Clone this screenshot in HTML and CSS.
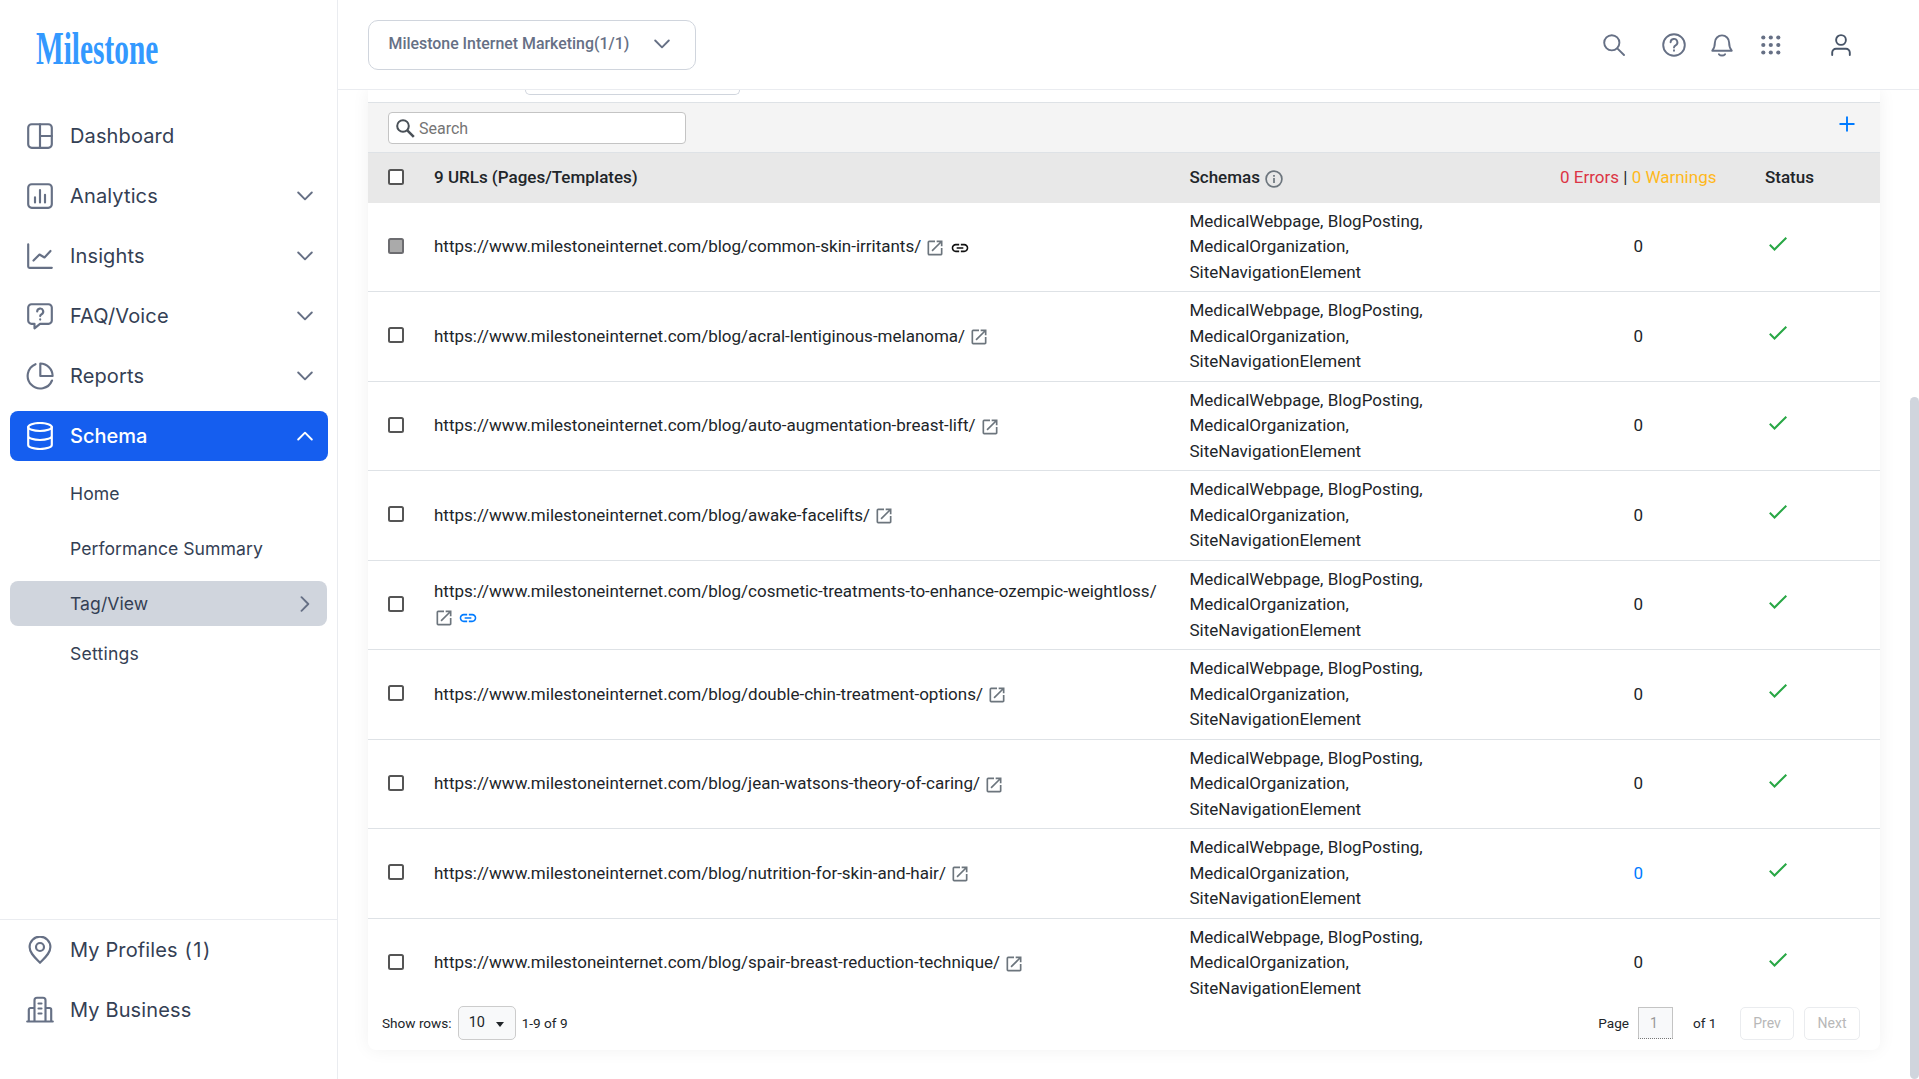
FILE: index.html
```html
<!DOCTYPE html>
<html lang="en">
<head>
<meta charset="utf-8">
<title>Milestone - Schema Tag/View</title>
<link rel="stylesheet" href="styles.css">
</head>
<body>
<svg class="sprite" aria-hidden="true">
  <symbol id="chev" viewBox="0 0 16 10"><path d="M1.200 1.500 8 8.300l6.800-6.800" fill="none" stroke="currentColor" stroke-width="1.900" stroke-linecap="round" stroke-linejoin="round"/></symbol>
  <symbol id="open" viewBox="0 0 24 24"><path fill="currentColor" d="M19 19H5V5h7V3H5a2 2 0 0 0-2 2v14a2 2 0 0 0 2 2h14c1.100 0 2-.9 2-2v-7h-2v7zM14 3v2h3.590l-9.830 9.830 1.410 1.410L19 6.410V10h2V3h-7z"/></symbol>
  <symbol id="link" viewBox="0 0 24 24"><path fill="currentColor" d="M3.900 12c0-1.710 1.390-3.100 3.100-3.100h4V7H7c-2.760 0-5 2.240-5 5s2.240 5 5 5h4v-1.900H7c-1.710 0-3.100-1.390-3.100-3.100zM8 13h8v-2H8v2zm9-6h-4v1.900h4c1.710 0 3.100 1.390 3.100 3.100s-1.390 3.100-3.100 3.100h-4V17h4c2.760 0 5-2.240 5-5s-2.240-5-5-5z"/></symbol>
  <symbol id="check" viewBox="0 0 20 16"><path d="M1.800 8.800 6.500 13.500 18.300 1.700" fill="none" stroke="currentColor" stroke-width="2"/></symbol>
</svg>
<div class="app">
  <aside class="sidebar">
    <div class="logo"><span class="logo-text">Milestone</span></div>
    <nav class="nav">
      <a class="item"><svg class="ico" viewBox="0 0 28 28"><rect x="2.200" y="2.200" width="23.600" height="23.600" rx="3.500"/><path d="M14 2.200v23.600M14 14h11.800"/></svg><span>Dashboard</span></a>
      <a class="item"><svg class="ico" viewBox="0 0 28 28"><rect x="2.200" y="2.200" width="23.600" height="23.600" rx="3.500"/><path d="M9 15.200v5.300M14 8v12.500M19 12.700v7.800"/></svg><span>Analytics</span><svg class="chev"><use href="#chev"/></svg></a>
      <a class="item"><svg class="ico" viewBox="0 0 28 28"><path d="M2.200 2.200v22.300q0 1.300 1.300 1.300h22.300M7.500 18.500l6-6 5 3 6-6.500"/></svg><span>Insights</span><svg class="chev"><use href="#chev"/></svg></a>
      <a class="item"><svg class="ico" viewBox="0 0 28 28"><path d="M5.500 2.200h17a3.300 3.300 0 0 1 3.300 3.300v13a3.300 3.300 0 0 1-3.300 3.300H14l-5.500 4.500v-4.500h-3a3.300 3.300 0 0 1-3.300-3.300v-13a3.300 3.300 0 0 1 3.300-3.300zM11.200 9.500a3 3 0 1 1 4.400 2.700c-1 .5-1.400.9-1.400 1.900M14.200 17.300v.3"/></svg><span>FAQ/Voice</span><svg class="chev"><use href="#chev"/></svg></a>
      <a class="item"><svg class="ico" viewBox="0 0 28 28"><path d="M14.300 1.500V14h12.300A12.500 12.500 0 0 0 14.300 1.500zM9.500 2.200A12.600 12.600 0 1 0 26 18.500"/></svg><span>Reports</span><svg class="chev"><use href="#chev"/></svg></a>
      <a class="item active"><svg class="ico" viewBox="0 0 28 28"><ellipse cx="14" cy="5" rx="11.800" ry="4"/><path d="M2.200 5v18c0 2.200 5.200 4 11.800 4s11.800-1.800 11.800-4V5M2.200 14c0 2.200 5.200 4 11.800 4s11.800-1.800 11.800-4"/></svg><span>Schema</span><svg class="chev up"><use href="#chev"/></svg></a>
    </nav>
    <div class="subnav">
      <a class="sub tall">Home</a>
      <a class="sub tall">Performance Summary</a>
      <a class="sub current"><span>Tag/View</span><svg class="chev side"><use href="#chev"/></svg></a>
      <a class="sub last">Settings</a>
    </div>
    <div class="side-foot">
      <a class="item profiles"><svg class="ico" viewBox="0 0 28 28"><path d="M14 26.800C9 21.500 3.600 17 3.600 11a10.400 10.400 0 0 1 20.800 0c0 6-5.400 10.500-10.400 15.800z"/><circle cx="14" cy="11" r="4"/></svg><span>My Profiles <b>(1)</b></span></a>
      <a class="item"><svg class="ico" viewBox="0 0 28 28"><path d="M1.200 25.500h25.600M8.500 25V4.200a2.500 2.500 0 0 1 2.500-2.500h6a2.500 2.500 0 0 1 2.500 2.500V25M8.500 12h-4a1.700 1.700 0 0 0-1.700 1.700V25M19.500 12h4a1.700 1.700 0 0 1 1.700 1.700V25M12.500 7.500h3M12.500 12.500h3M12.500 17.500h3"/></svg><span>My Business</span></a>
    </div>
  </aside>
  <div class="main">
    <header class="topbar">
      <div class="account"><span>Milestone Internet Marketing(1/1)</span><svg class="chev"><use href="#chev"/></svg></div>
      <div class="tools">
        <svg class="t-search" width="22" height="22" viewBox="0 0 22 22"><circle cx="8.800" cy="8.800" r="7.600"/><path d="M14.300 14.300 21 21"/></svg>
        <svg class="t-help" width="24" height="24" viewBox="0 0 24 24"><circle cx="12" cy="12" r="10.800"/><path d="M8.600 9.300a3.400 3.400 0 1 1 5 3c-1.200.6-1.600 1.100-1.600 2.300M12 17.300v.4"/></svg>
        <svg class="t-bell" width="22" height="24" viewBox="0 0 22 24"><path d="M1.300 17.700c2.200-2.700 2.600-5.200 2.600-8.200a7.100 7.100 0 0 1 14.200 0c0 3 .4 5.500 2.600 8.200zM8 21.300c1.500 1.600 4.500 1.600 6 0"/></svg>
        <svg class="t-grid" width="20" height="20" viewBox="0 0 20 20"><g class="dots"><circle cx="2.300" cy="2.500" r="2.100"/><circle cx="9.800" cy="2.500" r="2.100"/><circle cx="17.300" cy="2.500" r="2.100"/><circle cx="2.300" cy="10" r="2.100"/><circle cx="9.800" cy="10" r="2.100"/><circle cx="17.300" cy="10" r="2.100"/><circle cx="2.300" cy="17.500" r="2.100"/><circle cx="9.800" cy="17.500" r="2.100"/><circle cx="17.300" cy="17.500" r="2.100"/></g></svg>
        <svg class="t-user" width="20" height="22" viewBox="0 0 20 22"><circle cx="10" cy="6" r="4.900"/><path d="M1.200 21v-2.500a3.800 3.800 0 0 1 3.800-3.800h10a3.800 3.800 0 0 1 3.800 3.800V21"/></svg>
      </div>
    </header>
    <section class="content">
      <div class="card">
        <div class="filters"><div class="filter-box"></div></div>
        <div class="toolbar">
          <div class="search"><svg width="19" height="19" viewBox="0 0 19 19"><circle cx="7" cy="7" r="5.800"/><path class="handle" d="m11.300 11.300 6.500 6.500"/></svg><span>Search</span></div>
          <svg class="plus" width="16" height="16" viewBox="0 0 16 16"><path d="M8 .5v15M.5 8h15"/></svg>
        </div>
        <div class="row head">
          <i class="box"></i><div>9 URLs (Pages/Templates)</div>
          <div class="sch-h"><span>Schemas</span><svg width="18" height="18" viewBox="0 0 18 18"><circle cx="9" cy="9" r="7.900"/><path d="M9 8v5M9 5v1.700"/></svg></div>
          <div class="num"><span class="err">0 Errors</span> | <span class="warn">0 Warnings</span></div>
          <div class="status-h">Status</div>
        </div>
        <div class="row"><i class="box off"></i><div>https://www.milestoneinternet.com/blog/common-skin-irritants/ <svg class="mi"><use href="#open"/></svg> <svg class="mi black"><use href="#link"/></svg></div><div class="sch">MedicalWebpage, BlogPosting, MedicalOrganization, SiteNavigationElement</div><div class="num">0</div><svg class="ok"><use href="#check"/></svg></div>
        <div class="row"><i class="box"></i><div>https://www.milestoneinternet.com/blog/acral-lentiginous-melanoma/ <svg class="mi"><use href="#open"/></svg></div><div class="sch">MedicalWebpage, BlogPosting, MedicalOrganization, SiteNavigationElement</div><div class="num">0</div><svg class="ok"><use href="#check"/></svg></div>
        <div class="row"><i class="box"></i><div>https://www.milestoneinternet.com/blog/auto-augmentation-breast-lift/ <svg class="mi"><use href="#open"/></svg></div><div class="sch">MedicalWebpage, BlogPosting, MedicalOrganization, SiteNavigationElement</div><div class="num">0</div><svg class="ok"><use href="#check"/></svg></div>
        <div class="row"><i class="box"></i><div>https://www.milestoneinternet.com/blog/awake-facelifts/ <svg class="mi"><use href="#open"/></svg></div><div class="sch">MedicalWebpage, BlogPosting, MedicalOrganization, SiteNavigationElement</div><div class="num">0</div><svg class="ok"><use href="#check"/></svg></div>
        <div class="row"><i class="box"></i><div>https://www.milestoneinternet.com/blog/cosmetic-treatments-to-enhance-ozempic-weightloss/ <svg class="mi"><use href="#open"/></svg> <svg class="mi blue"><use href="#link"/></svg></div><div class="sch">MedicalWebpage, BlogPosting, MedicalOrganization, SiteNavigationElement</div><div class="num">0</div><svg class="ok"><use href="#check"/></svg></div>
        <div class="row"><i class="box"></i><div>https://www.milestoneinternet.com/blog/double-chin-treatment-options/ <svg class="mi"><use href="#open"/></svg></div><div class="sch">MedicalWebpage, BlogPosting, MedicalOrganization, SiteNavigationElement</div><div class="num">0</div><svg class="ok"><use href="#check"/></svg></div>
        <div class="row"><i class="box"></i><div>https://www.milestoneinternet.com/blog/jean-watsons-theory-of-caring/ <svg class="mi"><use href="#open"/></svg></div><div class="sch">MedicalWebpage, BlogPosting, MedicalOrganization, SiteNavigationElement</div><div class="num">0</div><svg class="ok"><use href="#check"/></svg></div>
        <div class="row"><i class="box"></i><div>https://www.milestoneinternet.com/blog/nutrition-for-skin-and-hair/ <svg class="mi"><use href="#open"/></svg></div><div class="sch">MedicalWebpage, BlogPosting, MedicalOrganization, SiteNavigationElement</div><div class="num blue">0</div><svg class="ok"><use href="#check"/></svg></div>
        <div class="row"><i class="box"></i><div>https://www.milestoneinternet.com/blog/spair-breast-reduction-technique/ <svg class="mi"><use href="#open"/></svg></div><div class="sch">MedicalWebpage, BlogPosting, MedicalOrganization, SiteNavigationElement</div><div class="num">0</div><svg class="ok"><use href="#check"/></svg></div>
        <div class="pager">
          <span>Show rows:</span>
          <div class="select"><span>10</span><i class="caret"></i></div>
          <span>1-9 of 9</span>
          <span class="page-label">Page</span>
          <div class="page-input">1</div>
          <span class="of">of 1</span>
          <div class="btn prev">Prev</div>
          <div class="btn next">Next</div>
        </div>
      </div>
    </section>
  </div>
  <div class="scroll"></div>
</div>
</body>
</html>
```
FILE: styles.css
```css
* { box-sizing: border-box; }
body { margin: 0; background: #fff; font-family: Roboto, "Liberation Sans", sans-serif; color: #212529; overflow: hidden; }
svg { display: block; flex: none; fill: none; }
.sprite { position: absolute; width: 0; height: 0; }
.app { display: flex; width: 1919px; height: 1079px; position: relative; overflow: hidden; }

/* Sidebar */
.sidebar { width: 338px; flex: none; display: flex; flex-direction: column; border-right: 1px solid #eaecf0; font-family: Inter, "Liberation Sans", sans-serif; color: #344054; }
.logo { height: 106px; padding: 22px 0 0 36px; }
.logo-text { display: inline-block; font-family: "Liberation Serif", serif; font-weight: 700; font-size: 46px; line-height: 54px; color: #3399ff; transform: scaleX(.638); transform-origin: 0 0; }
.nav { display: flex; flex-direction: column; gap: 10px; padding: 5px 9px 0 10px; }
.item { display: flex; align-items: center; height: 50px; padding: 0 15px 0 16px; font-size: 20px; letter-spacing: .13px; border-radius: 8px; }
.item span { margin-left: 16px; flex: 1; }
.profiles b { font-weight: 400; letter-spacing: 1.500px; margin-left: 1px; }
.ico { width: 28px; height: 28px; stroke: #667085; stroke-width: 2.150; stroke-linecap: round; stroke-linejoin: round; }
.chev { width: 16px; height: 10px; color: #667085; }
.active { background: #155eef; color: #fff; font-weight: 500; letter-spacing: 0; }
.active .ico { stroke: #fff; }
.up { transform: rotate(180deg); color: #fff; }
.side { transform: rotate(-90deg); }
.subnav { padding: 5px 10px 0; font-size: 17.600px; letter-spacing: .05px; display: flex; flex-direction: column; }
.sub { display: flex; align-items: center; justify-content: space-between; padding: 0 14px 0 60px; }
.tall { height: 55px; }
.current { height: 45px; margin-top: 5px; background: #d0d5dd; border-radius: 8px; }
.last { height: 55px; letter-spacing: .2px; }
.side-foot { margin-top: auto; height: 160px; border-top: 1px solid #eaecf0; padding: 5px 10px; display: flex; flex-direction: column; gap: 10px; }

/* Header */
.main { flex: 1; display: flex; flex-direction: column; min-width: 0; }
.topbar { height: 90px; flex: none; border-bottom: 1px solid #eaecf0; display: flex; justify-content: space-between; align-items: flex-start; padding: 20px 68px 0 30px; }
.account { width: 328px; height: 50px; border: 1px solid #d0d5dd; border-radius: 10px; display: flex; align-items: center; justify-content: space-between; padding: 0 25px 3px 19.500px; font-size: 15.900px; font-weight: 500; color: #667085; }
.tools { display: flex; align-items: center; height: 49px; stroke: #667085; stroke-width: 1.900; stroke-linecap: round; stroke-linejoin: round; }
.t-help { margin-left: 37px; }
.t-bell { margin-left: 25px; }
.t-grid { margin-left: 28px; }
.t-user { margin-left: 50px; stroke: #475467; }
.dots { fill: #667085; stroke: none; }

/* Table card */
.content { padding: 0 39px 0 30px; flex: 1; min-height: 0; overflow: hidden; }
.card { background: #fff; height: 960px; border-radius: 0 0 8px 8px; box-shadow: 0 0 18px rgba(0,0,0,.06); display: flex; flex-direction: column; }
.filters { height: 12px; flex: none; padding-left: 157px; }
.filter-box { width: 215px; height: 5px; border: 1px solid #d0d5dd; border-top: 0; border-radius: 0 0 5px 5px; }
.toolbar { height: 51px; flex: none; background: #f4f4f4; border: solid #dee2e6; border-width: 1px 0; display: flex; justify-content: space-between; padding: 9px 25px 0 20px; }
.search { width: 298px; height: 32px; border: 1px solid #c4c4c4; border-radius: 4px; background: #fff; display: flex; align-items: center; gap: 4px; padding-left: 7px; font-size: 16px; color: #757575; }
.search svg { stroke: #495057; stroke-width: 2; }
.handle { stroke-width: 2.600; }
.plus { margin-top: 4px; stroke: #007bff; stroke-width: 1.900; }
.row { flex: none; height: 89.500px; display: grid; grid-template-columns: 66px 755.500px 294px 1fr 105px; align-items: center; font-size: 17px; line-height: 25.500px; border-bottom: 1px solid #dee2e6; padding-right: 10px; }
.row:nth-last-child(2) { border-bottom: 0; height: 88.500px; }
.row > div:nth-child(2) { padding-right: 20px; }
.head { height: 49.700px; background: #e8e8e8; font-weight: 500; border: 0; }
.box { width: 16px; height: 16px; margin: 0 0 2.500px 20px; border: 2px solid #555; border-radius: 2.500px; background: #fff; }
.off { background: #aaa; border-color: #6c6c70; }
.sch-h { display: flex; align-items: center; gap: 5.500px; }
.sch-h svg { stroke: #6c757d; stroke-width: 1.700; margin-top: 2px; }
.num { text-align: center; white-space: nowrap; }
.row .num { padding-left: 28px; }
.head .num { font-weight: 400; }
.err { color: #dc3545; }
.warn { color: #ffb81c; }
.mi { display: inline-block; width: 20px; height: 20px; color: #6c757d; vertical-align: -5.500px; }
.black { color: #111; }
.blue { color: #007bff; }
.ok { width: 20px; height: 16px; color: #28a745; margin: 0 0 6.500px 2.500px; }

/* Pagination */
.pager { display: flex; align-items: center; height: 34px; margin-top: -1px; padding: 0 20px 0 14px; font-size: 13.600px; }
.select { width: 58px; height: 34px; margin: 0 6px; border: 1px solid #ccc; border-radius: 5px; background: #f8f9fa; display: flex; align-items: center; justify-content: space-between; padding: 0 11px 2px 10px; font-size: 14.500px; }
.caret { border: 4.500px solid transparent; border-top: 5px solid #212529; border-bottom: 0; margin-top: 4px; }
.page-label { margin-left: auto; }
.page-input { width: 35px; height: 32px; margin: 0 20px 0 9px; padding: 5px 0 0 11px; border: 1px solid #c4c4c4; border-bottom: 1px dotted #777; background: #f8f9fa; color: #999; font-size: 14px; line-height: 20px; }
.of { width: 47px; }
.btn { height: 33px; border: 1px solid #eaecef; border-radius: 5px; color: #b8b8b8; font-size: 14px; display: flex; align-items: center; justify-content: center; }
.prev { width: 54px; margin-right: 10px; }
.next { width: 56px; }

.scroll { position: absolute; right: 0; top: 397px; width: 9px; height: 682px; border-radius: 5px; background: #d0d5dd; }
```
